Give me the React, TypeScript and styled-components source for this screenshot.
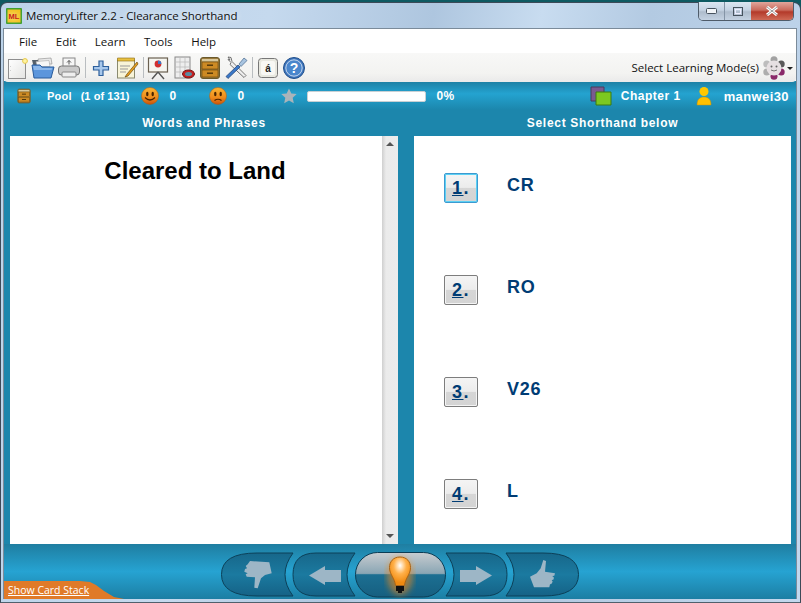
import React from "react";
import styled, { createGlobalStyle } from "styled-components";

const Global = createGlobalStyle`
  html, body { margin: 0; padding: 0; background: #0d5c66; }
  body { width: 801px; height: 603px; overflow: hidden; font-family: "Open Sans", "Liberation Sans", sans-serif; }
`;

const Frame = styled.div`
  width: 801px; height: 603px; box-sizing: border-box; padding-top: 2px;
  background: #0e5a62; display: flex; flex-direction: column;
`;
const Win = styled.div`
  flex: 1; display: flex; flex-direction: column; box-sizing: border-box; min-height: 0;
  border: 1px solid #3c4a58; border-bottom-color: #50606c; border-radius: 7px 7px 0 0; position: relative;
  padding: 0 3px 3px 2px;
  background: linear-gradient(100deg, #bcd3e9 0%, #c5d9ee 30%, #aec6df 48%, #c8dcf0 60%, #b3cae2 72%, #c3d8ee 100%);
`;
const TitleBar = styled.div`
  height: 25px; flex: none; display: flex; align-items: center; gap: 4px; padding-left: 3px;
  font-size: 11.5px; color: #111; text-shadow: 0 0 6px #fff;
`;
const TitleText = styled.span` letter-spacing: -0.08px; `;
const Caption = styled.div`
  position: absolute; top: -1px; right: 6px; display: flex; height: 18px;
  border: 1px solid #4f5c6a; border-top: none; border-radius: 0 0 5px 5px; overflow: hidden;
`;
const CapBtn = styled.div<{ $w: number; $close?: boolean }>`
  width: ${p => p.$w}px; display: flex; align-items: center; justify-content: center;
  border-left: ${p => (p.$close ? "none" : "1px solid #8494a6")};
  &:first-child { border-left: none; }
  background: ${p => p.$close ? "linear-gradient(#e0a69c 0%, #c96a5b 45%, #b33a2a 55%, #cf6a56 100%)" : "linear-gradient(#dce6f1 0%, #c5d3e3 45%, #aebccc 55%, #c4d2e2 100%)"};
`;
const Client = styled.div`
  flex: 1; display: flex; flex-direction: column; min-height: 0;
  border: 1px solid #7b8b9a; border-bottom: none; background: #fff;
`;
const MenuBar = styled.div`
  height: 24px; flex: none; display: flex; align-items: center; padding-left: 15px; gap: 18.6px;
  font-size: 11.5px; color: #111; background: #fff;
`;
const Toolbar = styled.div`
  height: 29px; flex: none; display: flex; align-items: center; padding: 0 3px 0 1px;
  background: linear-gradient(#f8f8f7, #f3f3f1 70%, #eaeaea); border-radius: 0 0 4px 4px;
  position: relative; z-index: 1;
`;
const ToolIcon = styled.svg`
  width: 24px; height: 24px; flex: none; margin-right: 2px;
`;
const Sep = styled.div<{ $r?: number }>`
  width: 1px; height: 21px; background: #b9bdc0; margin: 0 ${p => p.$r ?? 3}px 0 2px; flex: none;
`;
const Spring = styled.div` flex: 1; `;
const ModeLabel = styled.span` font-size: 11.5px; color: #111; margin-right: 4px; `;
const Blue = styled.div`
  flex: 1; display: flex; flex-direction: column; min-height: 0; margin-top: -1px; padding-top: 1px;
  background: #1c86ac; position: relative;
`;
const Status = styled.div`
  height: 28px; flex: none; display: flex; align-items: center; padding: 0 7px 0 12px;
  color: #fff; font: bold 11px "Liberation Sans", sans-serif; letter-spacing: 0.2px;
  background: linear-gradient(#1d81a6 0%, #24a3d0 42%, #1c86ac 100%);
`;
const PoolLabel = styled.span` margin: 0 9px 0 15px; `;
const PoolCount = styled.span` margin-right: 12px; letter-spacing: 0.05px; `;
const StatusNum = styled.span<{ $w: number }>` font-size: 12px; width: ${p => p.$w}px; margin-left: 10px; `;
const Progress = styled.div`
  width: 119px; height: 11px; box-sizing: border-box; background: #fff; border: 1px solid #c8d0d4; border-radius: 2px; margin: 0 10px 0 10px;
`;
const Percent = styled.span` font-size: 12px; letter-spacing: .4px; `;
const Chapter = styled.span` font-size: 12px; margin: 0 15px 0 9px; letter-spacing: .5px; `;
const User = styled.span` font-size: 13px; margin-left: 12px; letter-spacing: .4px; `;
const Heads = styled.div`
  height: 26px; flex: none; display: grid; grid-template-columns: 388px 377px; column-gap: 16px; padding-left: 6px;
  color: #fff; font: bold 12px "Liberation Sans", sans-serif; letter-spacing: .7px; align-items: center; text-align: center;
`;
const Panels = styled.div`
  height: 408px; flex: none; display: grid; grid-template-columns: 388px 377px; column-gap: 16px; padding-left: 6px;
`;
const Left = styled.div` background: #fff; display: flex; min-height: 0; `;
const Question = styled.div`
  flex: 1; text-align: center; padding: 21px 2px 0 0; font: bold 24px/28px "Liberation Sans", sans-serif; color: #000;
`;
const Scroll = styled.div`
  width: 16px; background: linear-gradient(90deg, #cfcfcf, #ebebeb 25%, #ececec); position: relative; flex: none;
`;
const Arrow = styled.div<{ $down?: boolean }>`
  position: absolute; left: 4px; ${p => (p.$down ? "bottom: 6px" : "top: 6px")}; width: 0; height: 0;
  border-left: 4px solid transparent; border-right: 4px solid transparent;
  ${p => (p.$down ? "border-top: 4px solid #555" : "border-bottom: 4px solid #555")};
`;
const Right = styled.div`
  background: #fff; display: flex; flex-direction: column; padding: 37px 0 0 30px; gap: 72px;
`;
const Row = styled.div` display: flex; align-items: flex-start; height: 30px; `;
const NumBtn = styled.div<{ $active?: boolean }>`
  width: 34px; height: 30px; box-sizing: border-box; flex: none; text-align: center; border-radius: 2px;
  font: bold 18px/28px "Liberation Sans", sans-serif; color: #003c74; letter-spacing: 1.5px;
  border: 1px solid ${p => (p.$active ? "#3c9ad0" : "#7d7d7d")};
  box-shadow: ${p => (p.$active ? "inset 0 0 0 1px #5cd0f4" : "inset 0 0 0 1px #f4f4f4")};
  background: linear-gradient(#f4f4f4 0%, #ececec 48%, #d6d6d6 50%, #d4d4d4 100%);
`;
const Num = styled.span` text-decoration: underline; `;
const Answer = styled.div`
  margin-left: 29px; font: bold 18px/24px "Liberation Sans", sans-serif; color: #003c74; letter-spacing: .7px;
`;
const Bottom = styled.div`
  flex: 1; min-height: 0; display: flex; justify-content: center; align-items: flex-start; padding: 8px 1px 0 0; position: relative;
  background: linear-gradient(#1f7ea1 0%, #26a3d2 50%, #1c7ea3 100%);
`;
const NavSvg = styled.svg` width: 358px; height: 46px; display: block; `;
const CardStack = styled.div`
  position: absolute; left: 0; bottom: 0; width: 120px; height: 18px;
  clip-path: polygon(0 0, 76px 0, 86px 1px, 92px 4px, 100px 10px, 110px 16px, 120px 18px, 0 18px);
  background: #e07a28; color: #fff; font-size: 10.5px; line-height: 19px; padding-left: 4px; box-sizing: border-box;
`;
const CardLink = styled.span` text-decoration: underline; `;

const Smile = ({ sad }: { sad?: boolean }) => (
  <svg width="18" height="18" viewBox="0 0 18 18" style={{ flex: "none" }}>
    <defs><linearGradient id={sad ? "fs" : "fh"} x1="0" x2="0" y1="0" y2="1"><stop offset="0" stopColor="#fbb733" /><stop offset=".6" stopColor="#ee8a1c" /><stop offset="1" stopColor="#c8520a" /></linearGradient></defs>
    <circle cx="9" cy="9" r="8.5" fill={`url(#${sad ? "fs" : "fh"})`} stroke="#b05a10" strokeWidth=".5" />
    <ellipse cx="6.3" cy="7" rx="1.2" ry="2.2" fill="#4a2400" /><ellipse cx="11.7" cy="7" rx="1.2" ry="2.2" fill="#4a2400" />
    <path d={sad ? "M5.5 13.5q3.5-2.5 7 0" : "M4 10.5q5 5 10 0"} stroke="#4a2400" strokeWidth="1.2" fill="none" />
  </svg>
);

const Drawer = ({ s = 24 }: { s?: number }) => (
  <svg width={s} height={s} viewBox="0 0 24 24" style={{ flex: "none" }}>
    <rect x="2.5" y="1.5" width="19" height="21" rx="2.5" fill="#9a7a3c" stroke="#6a5a2c" />
    <rect x="4" y="3" width="16" height="2.5" fill="#d8c89c" />
    <rect x="4" y="6" width="16" height="7" fill="#cc8a24" stroke="#6f4c10" strokeWidth=".7" />
    <rect x="4" y="14" width="16" height="7" fill="#cc8a24" stroke="#6f4c10" strokeWidth=".7" />
    <rect x="9" y="8.5" width="6" height="1.4" fill="#4e3408" /><rect x="9" y="16.5" width="6" height="1.4" fill="#4e3408" />
  </svg>
);

const thumbUp = "M322.3 8L325 9 324 19.7 334 21.3 333.3 23.7 331.3 24 333 25.7 332.3 27.7 330.7 28 331.7 29.7 330.3 32 329 32.3 328.3 35.3 313 35.3 309 24.7 315.7 21.3 319.7 16.3z";
const thumbDown = "M29 9L48.3 10.3 50.7 21.3 44 23 40 26.3 36.7 36.3 33.3 35.7 34 25.3 25.7 24.7 24.7 22.3 26.7 21.3 23.3 19.7 24 17 26 16.3 24.7 14 26.7 12.3z";

export default function App() {
  return (
    <>
      <Global />
      <Frame>
        <Win>
          <TitleBar>
            <svg width="16" height="16" viewBox="0 0 16 16" style={{ flex: "none" }}>
              <rect width="16" height="16" rx="1" fill="#3f9e2e" /><rect x="1.5" y="1.5" width="13" height="13" fill="#f4c21c" />
              <text x="8" y="11" fontSize="7.5" fontWeight="700" textAnchor="middle" fill="#c8201c" fontFamily="Liberation Sans">ML</text>
            </svg>
            <TitleText>MemoryLifter 2.2 - Clearance Shorthand</TitleText>
          </TitleBar>
          <Caption>
            <CapBtn $w={25}><svg width="11" height="6"><rect x=".5" y=".5" width="10" height="5" rx="1" fill="#f2f5f8" stroke="#47525e" /></svg></CapBtn>
            <CapBtn $w={26}><svg width="10" height="9"><rect x=".5" y=".5" width="9" height="8" fill="none" stroke="#47525e" /><rect x="2.5" y="2.5" width="5" height="4" fill="none" stroke="#eef" /></svg></CapBtn>
            <CapBtn $w={42} $close><svg width="14" height="10" viewBox="0 0 14 10"><path d="M2 1l10 8M12 1L2 9" stroke="#fff" strokeWidth="3" /><path d="M2 1l10 8M12 1L2 9" stroke="#555" strokeWidth=".6" /></svg></CapBtn>
          </Caption>
          <Client>
            <MenuBar><span>File</span><span>Edit</span><span>Learn</span><span>Tools</span><span>Help</span></MenuBar>
            <Toolbar>
              <ToolIcon viewBox="0 0 24 24"><defs><linearGradient id="doc" x1="0" x2="1" y1="0" y2="1"><stop offset="0" stopColor="#fff" /><stop offset="1" stopColor="#e4e4e2" /></linearGradient></defs><rect x="3.5" y="3.5" width="17" height="19" fill="url(#doc)" stroke="#8f8f8f" /><circle cx="20" cy="5" r="2.4" fill="#fff4a0" stroke="#e6c84a" /><path d="M5.5 10v.5M5.5 14v.5" stroke="#aaa" /></ToolIcon>
              <ToolIcon viewBox="0 0 24 24"><path d="M1 4h6l1 2h2v6H3z" fill="#55606a" /><path d="M7 3l13-1 1 6H8z" fill="#e8e8e8" stroke="#8a8a8a" strokeWidth=".6" /><path d="M5 5.5l13-1 1 6H6z" fill="#f6f6f6" stroke="#999" strokeWidth=".5" /><path d="M1 9h8l2 2h12l-3 11H3z" fill="#5c96dc" stroke="#2a5c9c" /><path d="M2 10h7l2 2h10l-.3 2H3z" fill="#8db8ea" /></ToolIcon>
              <ToolIcon viewBox="0 0 24 24"><rect x="6" y="2" width="12" height="9" fill="#f6f6f6" stroke="#888" /><path d="M12 8.5V4.5M10 6.5l2-2 2 2" stroke="#555" fill="none" /><rect x="1.5" y="10" width="21" height="9" rx="3" fill="#c9c9c9" stroke="#777" /><rect x="5" y="16" width="14" height="5" rx="1" fill="#eee" stroke="#888" /></ToolIcon>
              <Sep />
              <ToolIcon viewBox="0 0 24 24"><path d="M10 5h4v5.5h5.5v3.5H14v5.5h-4V14H4.5v-3.5H10z" fill="#a8c8ec" stroke="#2d5f9c" strokeWidth="1.2" /></ToolIcon>
              <ToolIcon viewBox="0 0 24 24"><rect x="2.5" y="4" width="17" height="18" fill="#f8f4d8" stroke="#8a8a70" /><path d="M2.5 2h17v3h-17z" fill="#e8c040" stroke="#8a6a10" strokeWidth=".6" /><path d="M5 10h10M5 13h8M5 16h6" stroke="#999" /><path d="M22 6L12 18l-2 3 3-1L23 8z" fill="#e8a020" stroke="#6a4a10" strokeWidth=".7" /></ToolIcon>
              <Sep $r={2} />
              <ToolIcon viewBox="0 0 24 24"><rect x="2.5" y="2" width="19" height="14" fill="#f6f6f0" stroke="#6a6050" strokeWidth="1.2" /><circle cx="12" cy="8" r="3.4" fill="#d03030" /><path d="M12 8V4.6a3.4 3.4 0 013.4 3.4z" fill="#3a7ac8" /><path d="M12 16l-6 7M12 16l6 7" stroke="#555" strokeWidth="1.4" /></ToolIcon>
              <ToolIcon viewBox="0 0 24 24"><rect x="3" y="1" width="15" height="21" fill="#eee" stroke="#888" /><path d="M3 6h15M3 11h15M3 16h15M8 1v21M13 1v21" stroke="#bbb" strokeWidth=".8" /><ellipse cx="16.5" cy="18" rx="6" ry="4" fill="#c82020" stroke="#701010" /><ellipse cx="16.5" cy="18" rx="3.5" ry="2" fill="#5a8aa0" /></ToolIcon>
              <Drawer />
              <svg width="0" height="0" style={{ marginRight: 2 }} />
              <ToolIcon viewBox="0 0 24 24"><path d="M4 3.5l3 3-1 2 14 13 2-2L8 5.5l-1-4-3-.5 2 3z" fill="#eee" stroke="#555" strokeWidth=".8" /><path d="M2 20.5L14 9l2 2L4 22.5z" fill="#3a78c8" stroke="#1c3c70" strokeWidth=".7" /><path d="M15 8l5-6 3 2.5-6 6z" fill="#a8c4e0" stroke="#44648a" strokeWidth=".7" /></ToolIcon>
              <Sep />
              <ToolIcon viewBox="0 0 24 24"><rect x="2.5" y="2.5" width="19" height="19" rx="3" fill="#e8e8e0" stroke="#777" /><rect x="5" y="5" width="14" height="14" rx="2" fill="#f8f8f4" /><text x="12" y="16" fontSize="10" fontWeight="700" textAnchor="middle" fill="#222" fontFamily="Liberation Sans">á</text></ToolIcon>
              <ToolIcon viewBox="0 0 24 24"><circle cx="12" cy="12" r="10.5" fill="#3c74bc" stroke="#22508c" /><circle cx="12" cy="12" r="8.2" fill="#4a86cc" stroke="#c8d8ee" /><text x="12" y="17" fontSize="14" fontWeight="700" textAnchor="middle" fill="#fff" fontFamily="Liberation Sans">?</text></ToolIcon>
              <Spring />
              <ModeLabel>Select Learning Mode(s)</ModeLabel>
              <svg width="30" height="24" viewBox="0 0 30 24" style={{ flex: "none" }}>
                <circle cx="11" cy="3.8" r="3.5" fill="#a2a2a2" /><circle cx="11" cy="20.2" r="3.5" fill="#8a2a6a" /><circle cx="3.8" cy="8" r="3.5" fill="#bdbdbd" /><circle cx="18.2" cy="8" r="3.5" fill="#5a5a5a" /><circle cx="3.8" cy="16" r="3.5" fill="#adadad" /><circle cx="18.2" cy="16" r="3.5" fill="#8a2a6a" />
                <circle cx="11" cy="12" r="7.5" fill="#e6e0e2" /><circle cx="8.5" cy="10.5" r="1" fill="#666" /><circle cx="13.5" cy="10.5" r="1" fill="#666" /><path d="M8 14q3 2 6 0" stroke="#777" fill="none" />
                <path d="M24 11h6l-3 3z" fill="#222" />
              </svg>
            </Toolbar>
            <Blue>
              <Status>
                <Drawer s={16} />
                <PoolLabel>Pool</PoolLabel>
                <PoolCount>(1 of 131)</PoolCount>
                <Smile />
                <StatusNum $w={40}>0</StatusNum>
                <Smile sad />
                <StatusNum $w={44}>0</StatusNum>
                <svg width="16" height="16" viewBox="0 0 16 16" style={{ flex: "none" }}><path d="M8 .5l2.3 5 5.4.6-4 3.7 1.1 5.4L8 12.5l-4.8 2.7 1.1-5.4-4-3.7 5.4-.6z" fill="#aab4ba" /></svg>
                <Progress />
                <Percent>0%</Percent>
                <Spring />
                <svg width="22" height="20" viewBox="0 0 22 20" style={{ flex: "none" }}><path d="M1 1h13v14H1z" fill="#7a5a90" stroke="#4a3a5a" /><path d="M6 6h15v13H6z" fill="#7cc820" stroke="#3a7a10" /></svg>
                <Chapter>Chapter 1</Chapter>
                <svg width="16" height="20" viewBox="0 0 16 20" style={{ flex: "none" }}><circle cx="8" cy="5.5" r="4.5" fill="#ffc800" /><path d="M1 19c0-6 3-8 7-8s7 2 7 8z" fill="#ffc000" stroke="#c89000" strokeWidth=".5" /></svg>
                <User>manwei30</User>
              </Status>
              <Heads><span>Words and Phrases</span><span>Select Shorthand below</span></Heads>
              <Panels>
                <Left>
                  <Question>Cleared to Land</Question>
                  <Scroll><Arrow /><Arrow $down /></Scroll>
                </Left>
                <Right>
                  {[["1.", "CR"], ["2.", "RO"], ["3.", "V26"], ["4.", "L"]].map(([n, a], i) => (
                    <Row key={n}>
                      <NumBtn $active={i === 0}><Num>{n[0]}</Num>.</NumBtn>
                      <Answer>{a}</Answer>
                    </Row>
                  ))}
                </Right>
              </Panels>
              <Bottom>
                <NavSvg viewBox="0 0 358 46">
                  <defs>
                    <linearGradient id="bulbbg" x1="0" x2="0" y1="0" y2="1"><stop offset="0" stopColor="#c8ccd0" /><stop offset=".47" stopColor="#8aa6b4" /><stop offset=".5" stopColor="#1c6f92" /><stop offset="1" stopColor="#165f80" /></linearGradient>
                    <linearGradient id="pill" x1="0" x2="0" y1="0" y2="1"><stop offset="0" stopColor="#17678a" /><stop offset=".5" stopColor="#1b7aa0" /><stop offset="1" stopColor="#156286" /></linearGradient>
                    <radialGradient id="bulb" cx=".5" cy=".3" r=".6"><stop offset="0" stopColor="#fff" /><stop offset=".5" stopColor="#ffb04a" /><stop offset="1" stopColor="#f08a10" /></radialGradient>
                    <filter id="glow"><feGaussianBlur stdDeviation="3" /></filter>
                  </defs>
                  <path d="M72 1H36Q.5 1 .5 22.5T36 44H72Q56 22.5 72 1z" fill="url(#pill)" stroke="#0c4058" />
                  <path d="M134 1H95Q72 1 72 22.5T95 44H134Q118 22.5 134 1z" fill="url(#pill)" stroke="#0c4058" />
                  <rect x="134.5" y=".5" width="90" height="44.5" rx="22" fill="url(#bulbbg)" stroke="#0c3c54" />
                  <path d="M225 1H263Q286 1 286 22.5T263 44H225Q241 22.5 225 1z" fill="url(#pill)" stroke="#0c4058" />
                  <path d="M285 1H322Q357.5 1 357.5 22.5T322 44H285Q301 22.5 285 1z" fill="url(#pill)" stroke="#0c4058" />
                  <path d={thumbDown} fill="#9db6c6" />
                  <path d="M88 23.5L104 14V18H120V30H104V33z" fill="#9db6c6" />
                  <path d="M271 23.5L255 14V18H239V30H255V33z" fill="#9db6c6" />
                  <path d={thumbUp} fill="#9db6c6" />
                  <ellipse cx="179" cy="24" rx="13" ry="19" fill="#ff8a10" opacity=".55" filter="url(#glow)" />
                  <path d="M179 5c-7 0-10.5 5-10.5 10.5 0 7 5 10 6 18h9c1-8 6-11 6-18C189.5 10 186 5 179 5z" fill="url(#bulb)" stroke="#a86418" />
                  <rect x="175" y="34" width="8" height="5" fill="#111" /><rect x="177" y="39" width="4" height="2" fill="#111" />
                </NavSvg>
                <CardStack><CardLink>Show Card Stack</CardLink></CardStack>
              </Bottom>
            </Blue>
          </Client>
        </Win>
      </Frame>
    </>
  );
}
